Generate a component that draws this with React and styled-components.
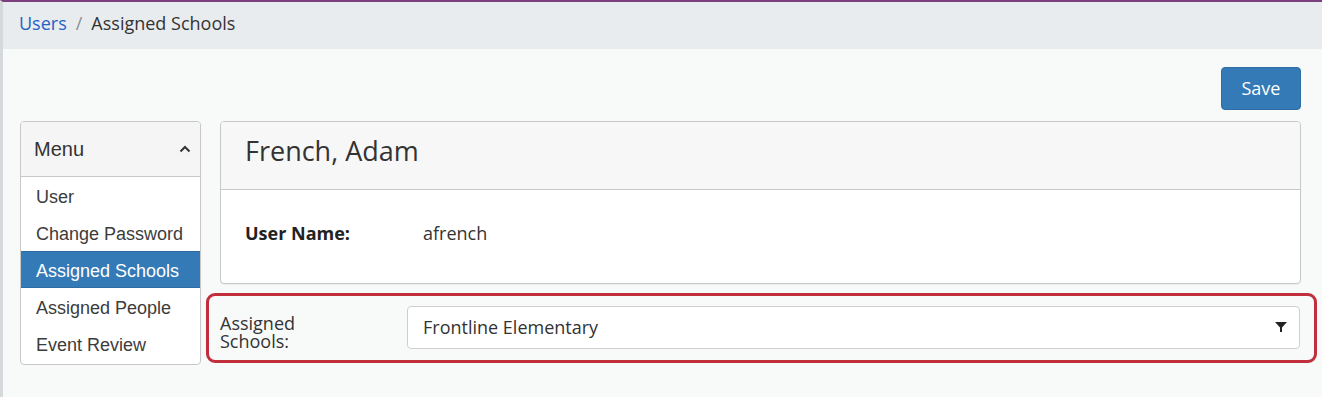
import React from "react";
import styled, { createGlobalStyle } from "styled-components";

const Global = createGlobalStyle`
  html, body { margin: 0; padding: 0; }
  body { background: #f8f9f9; font-family: "Open Sans", "Liberation Sans", sans-serif; color: #333; }
  * { box-sizing: border-box; }
`;

const Page = styled.div`
  width: 1322px;
  height: 397px;
  border-top: 2px solid #7b3f7e;
  border-left: 3px solid #d6d9dc;
  background: #f8f9f9;
  overflow: hidden;
`;

const Breadcrumb = styled.nav`
  height: 47px;
  background: #e9ecef;
  display: flex;
  align-items: center;
  padding: 0 0 6px 16px;
  font-size: 18px;
  gap: 9px;
`;

const Crumb = styled.a`
  color: ${(p) => (p.$link ? "#1f63c4" : "#333")};
  text-decoration: none;
`;

const Sep = styled.span`
  color: #8a8f94;
`;

const Content = styled.div`
  padding: 18px 21px 0 17px;
`;

const Toolbar = styled.div`
  display: flex;
  justify-content: flex-end;
`;

const SaveButton = styled.button`
  width: 80px;
  height: 43px;
  background: #337ab7;
  border: 1px solid #2e6da4;
  border-radius: 4px;
  color: #fff;
  font-family: "Open Sans", "Liberation Sans", sans-serif;
  font-size: 18px;
  padding: 0 0 2px;
`;

const Main = styled.div`
  display: flex;
  gap: 19px;
  margin-top: 11px;
`;

const Menu = styled.div`
  width: 181px;
  flex: none;
  align-self: flex-start;
  border: 1px solid #c8c8c8;
  border-radius: 4px;
  background: #fff;
  overflow: hidden;
  padding-bottom: 2px;
  font-family: "Liberation Sans", Arial, sans-serif;
`;

const MenuHeader = styled.div`
  height: 55px;
  background: #f5f5f5;
  border-bottom: 1px solid #c8c8c8;
  display: flex;
  align-items: center;
  justify-content: space-between;
  padding: 0 9px 0 13px;
  font-size: 20px;
  color: #333;
`;

const MenuItem = styled.div`
  height: 37px;
  display: flex;
  align-items: center;
  padding: 3px 0 0 15px;
  font-size: 18px;
  color: ${(p) => (p.$active ? "#fff" : "#3c3c3c")};
  background: ${(p) => (p.$active ? "#337ab7" : "transparent")};
  border: 1px solid ${(p) => (p.$active ? "#2e6da4" : "transparent")};
  border-left: none;
  border-right: none;
`;

const Column = styled.div`
  flex: 1;
  display: flex;
  flex-direction: column;
  gap: 9px;
`;

const Panel = styled.div`
  border: 1px solid #c8c8c8;
  border-radius: 4px;
  background: #fff;
  overflow: hidden;
  box-shadow: 0 1px 1px rgba(0, 0, 0, 0.05);
`;

const PanelHeader = styled.div`
  height: 68px;
  background: #f7f7f7;
  border-bottom: 1px solid #c8c8c8;
  display: flex;
  align-items: center;
  padding: 0 0 10px 24px;
  font-size: 27px;
  color: #333;
`;

const PanelBody = styled.div`
  height: 93px;
  display: flex;
  align-items: center;
  padding: 0 0 8px 24px;
  font-size: 18px;
`;

const FieldLabel = styled.div`
  width: 178px;
  font-weight: 700;
  color: #222;
`;

const FieldValue = styled.div`
  color: #333;
`;

const Highlight = styled.div`
  margin: 0 -16px 0 -14px;
  border: 3px solid #c12f3c;
  border-radius: 9px;
  padding: 8px 14px 10px 11px;
  display: flex;
  align-items: center;
`;

const SchoolsLabel = styled.label`
  width: 187px;
  flex: none;
  font-size: 18px;
  line-height: 18px;
  color: #333;
  padding: 10px 70px 0 0;
`;

const Select = styled.div`
  flex: 1;
  height: 43px;
  border: 1px solid #cfcfcf;
  border-radius: 4px;
  background: #fff;
  display: flex;
  align-items: center;
  justify-content: space-between;
  padding: 0 12px 0 15px;
  font-size: 18px;
  color: #333;
`;

const ChevronUp = () => (
  <svg width="12" height="8" viewBox="0 0 12 8">
    <polyline points="1.5,6.5 6,2 10.5,6.5" fill="none" stroke="#333" strokeWidth="2" />
  </svg>
);

const Caret = () => (
  <svg width="12" height="10" viewBox="0 0 12 10">
    <path d="M0 0 H12 L7 5.5 V10 H5 V5.5 Z" fill="#222" />
  </svg>
);

export default function App() {
  const items = ["User", "Change Password", "Assigned Schools", "Assigned People", "Event Review"];
  return (
    <>
      <Global />
      <Page>
        <Breadcrumb>
          <Crumb $link href="#">Users</Crumb>
          <Sep>/</Sep>
          <Crumb>Assigned Schools</Crumb>
        </Breadcrumb>
        <Content>
          <Toolbar>
            <SaveButton>Save</SaveButton>
          </Toolbar>
          <Main>
            <Menu>
              <MenuHeader>
                <span>Menu</span>
                <ChevronUp />
              </MenuHeader>
              {items.map((it) => (
                <MenuItem key={it} $active={it === "Assigned Schools"}>
                  {it}
                </MenuItem>
              ))}
            </Menu>
            <Column>
              <Panel>
                <PanelHeader>French, Adam</PanelHeader>
                <PanelBody>
                  <FieldLabel>User Name:</FieldLabel>
                  <FieldValue>afrench</FieldValue>
                </PanelBody>
              </Panel>
              <Highlight>
                <SchoolsLabel>Assigned Schools:</SchoolsLabel>
                <Select>
                  <span>Frontline Elementary</span>
                  <Caret />
                </Select>
              </Highlight>
            </Column>
          </Main>
        </Content>
      </Page>
    </>
  );
}
